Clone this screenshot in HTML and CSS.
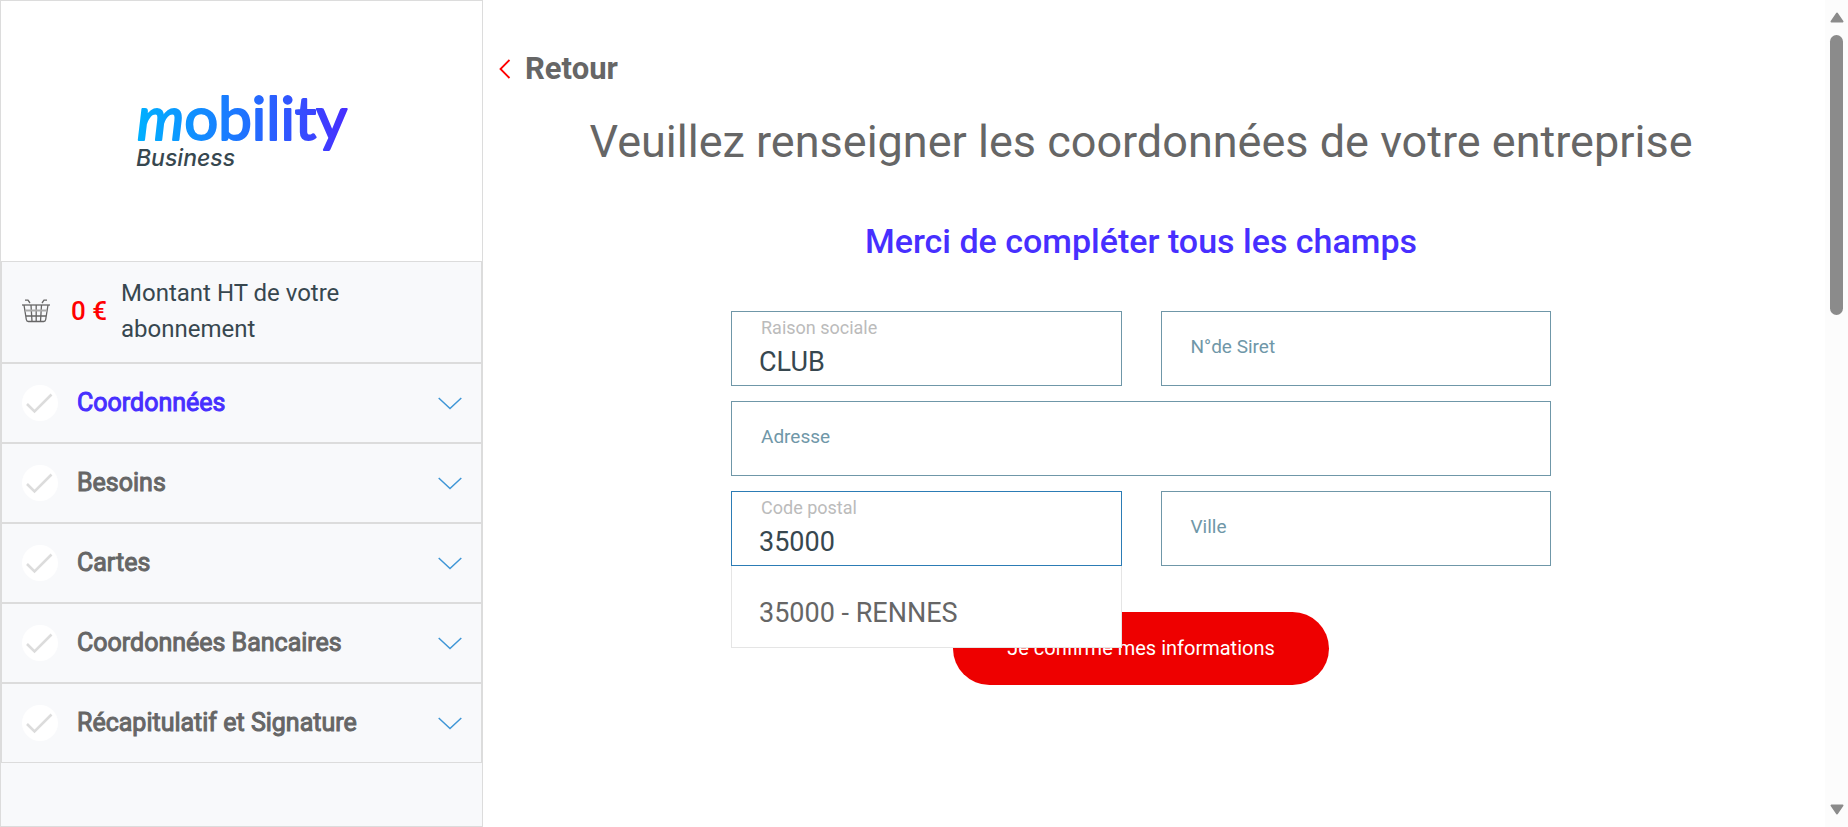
FILE: index.html
```html
<!DOCTYPE html>
<html lang="fr">
<head>
<meta charset="utf-8">
<meta name="viewport" content="width=device-width, initial-scale=1">
<title>Mobility Business</title>
<link rel="stylesheet" href="styles.css">
</head>
<body>
<svg class="defs" width="0" height="0" aria-hidden="true">
  <symbol id="check" viewBox="0 0 36 36"><circle cx="18" cy="18" r="18" fill="#fff"/><path d="M5 19l7.500 7.500L29.500 9.500" fill="none" stroke="#dcdcdc" stroke-width="2.600"/></symbol>
  <symbol id="chevron" viewBox="0 0 24 13"><path d="M.7 1L12 11.500 23.300 1" fill="none" stroke="#3f96d6" stroke-width="1.500"/></symbol>
</svg>
<div class="page">
  <aside class="sidebar">
    <div class="brand">
      <svg class="logo" viewBox="0 0 216 84" role="img" aria-label="Mobility Business">
        <defs><linearGradient id="brand" gradientUnits="userSpaceOnUse" x1="4" y1="0" x2="212" y2="0"><stop offset="0" stop-color="#00b0ff"/><stop offset=".5" stop-color="#1e74ff"/><stop offset="1" stop-color="#472fff"/></linearGradient></defs>
        <text class="logo-name" x="3" y="55" fill="url(#brand)" stroke="url(#brand)"><tspan font-style="italic">m</tspan>obility</text>
        <text class="logo-sub" x="2" y="81">Business</text>
      </svg>
    </div>
    <div class="total">
      <svg class="basket" viewBox="0 0 28 24" fill="none" stroke="#666" stroke-width="1.300"><path d="M3 1.200h3l2 2.800M25 1.200h-3l-2 2.800"/><path d="M0 6h28"/><path d="M2 6l2.300 14.500q.3 2 2 2h15.400q1.700 0 2-2L26 6M9 6l1 16.500M14.200 6v16.500M19.500 6l-1 16.500M3.500 17h21"/><path d="M3 11.500h22" stroke="#aaa" stroke-width="2"/></svg>
      <strong class="amount">0 €</strong>
      <span class="total-label">Montant HT de votre abonnement</span>
    </div>
    <nav class="steps">
      <button class="step active" type="button"><svg class="check"><use href="#check"/></svg><span>Coordonnées</span><svg class="chevron"><use href="#chevron"/></svg></button>
      <button class="step" type="button"><svg class="check"><use href="#check"/></svg><span>Besoins</span><svg class="chevron"><use href="#chevron"/></svg></button>
      <button class="step" type="button"><svg class="check"><use href="#check"/></svg><span>Cartes</span><svg class="chevron"><use href="#chevron"/></svg></button>
      <button class="step" type="button"><svg class="check"><use href="#check"/></svg><span>Coordonnées Bancaires</span><svg class="chevron"><use href="#chevron"/></svg></button>
      <button class="step" type="button"><svg class="check"><use href="#check"/></svg><span>Récapitulatif et Signature</span><svg class="chevron"><use href="#chevron"/></svg></button>
    </nav>
  </aside>
  <main class="main">
    <a class="back" href="#"><svg class="back-icon" viewBox="0 0 12 20"><path d="M10.500 1L1.500 10l9 9" fill="none" stroke="#f00" stroke-width="1.800"/></svg>Retour</a>
    <h1 class="title">Veuillez renseigner les coordonnées de votre entreprise</h1>
    <h2 class="subtitle">Merci de compléter tous les champs</h2>
    <form class="form">
      <div class="field filled"><label for="company">Raison sociale</label><input id="company" type="text" value="CLUB"></div>
      <div class="field"><label for="siret">N°de Siret</label><input id="siret" type="text"></div>
      <div class="field wide"><label for="address">Adresse</label><input id="address" type="text"></div>
      <div class="field filled current"><label for="zip">Code postal</label><input id="zip" type="text" value="35000">
        <ul class="suggestions"><li><button class="suggestion" type="button">35000 - RENNES</button></li></ul>
      </div>
      <div class="field"><label for="city">Ville</label><input id="city" type="text"></div>
      <button class="submit" type="submit">Je confirme mes informations</button>
    </form>
  </main>
  <div class="scrollbar" aria-hidden="true">
    <svg class="arrow" viewBox="0 0 14 11"><path d="M7 1.500L12.500 9.500h-11z" fill="#8b8b8b" stroke="#8b8b8b" stroke-width="2" stroke-linejoin="round"/></svg>
    <div class="track"><div class="thumb"></div></div>
    <svg class="arrow" viewBox="0 0 14 11"><path d="M7 9.500L1.500 1.500h11z" fill="#8b8b8b" stroke="#8b8b8b" stroke-width="2" stroke-linejoin="round"/></svg>
  </div>
</div>
</body>
</html>
```

FILE: styles.css
```css
* { box-sizing: border-box; }
body { margin: 0; font-family: Roboto, sans-serif; color: #666; background: #fff; }
button, input { font: inherit; }
.defs { position: absolute; }
.page { display: flex; min-height: 100vh; }

.sidebar { flex: 0 0 483px; display: flex; flex-direction: column; background: #f8f9fb; border: 1px solid #dcdcdc; }
.brand { display: flex; justify-content: center; padding: 84px 0 92px; background: #fff; }
.logo { width: 216px; height: 84px; overflow: visible; }
.logo-name { font-family: Lato, sans-serif; font-size: 60px; stroke-width: 2px; stroke-linejoin: round; }
.logo-sub { font-family: Inter, sans-serif; font-size: 23px; font-style: italic; font-weight: 500; fill: #37474f; }

.total { display: flex; align-items: center; min-height: 102px; padding: 0 60px 2px 20px; border: 1px solid #dcdcdc; color: #37474f; font-size: 24px; line-height: 36px; }
.basket { flex: none; width: 28px; height: 24px; }
.amount { flex: none; margin: 0 14px 0 21px; color: #f00; font-size: 26px; font-weight: 500; }

.step { display: flex; align-items: center; width: 100%; height: 80px; padding: 0 19px 0 20px; border: 1px solid #dcdcdc; background: none; color: #666; font-size: 25px; text-align: left; -webkit-text-stroke: 1px; }
.step span { flex: 1; padding-bottom: 2px; }
.step.active { color: #472fff; }
.check { flex: none; width: 36px; height: 36px; margin-right: 19px; }
.chevron { flex: none; width: 24px; height: 13px; }

.main { flex: 1; padding: 49px 42px 40px 16px; }
.back { display: inline-flex; align-items: center; gap: 14px; color: #666; font-size: 31px; line-height: 40px; font-weight: 700; text-decoration: none; }
.back-icon { width: 12px; height: 20px; }
.title { margin: 23px 0 0; font-size: 45px; line-height: 60px; font-weight: 400; text-align: center; }
.subtitle { margin: 47px 0 0; color: #472fff; font-size: 34px; line-height: 44px; font-weight: 500; text-align: center; }
.form { display: grid; grid-template-columns: 1fr 1fr; gap: 15px 39px; width: 66%; max-width: 820px; margin: 48px auto 0; }
.field { position: relative; height: 75px; }
.wide { grid-column: 1 / -1; }
.field label { position: absolute; left: 30px; top: 24px; color: #6f97a8; font-size: 19px; line-height: 24px; }
.field input { width: 100%; height: 100%; padding: 26px 27px 0; border: 1px solid #6f97a8; border-radius: 0; outline: 0; background: #fff; color: #37474f; font-size: 27px; }
.field.filled label { top: 5px; color: #bbb; font-size: 18px; }
.field.current input { border-color: #2c7cb5; }
.suggestions { position: absolute; z-index: 2; top: 100%; left: 0; right: 0; margin: 0; padding: 0; list-style: none; background: #fff; border: 1px solid #e5e5e5; border-top: 0; }
.suggestion { width: 100%; height: 81px; padding: 12px 27px 0; border: 0; background: none; color: #666; font-size: 27px; line-height: 30px; text-align: left; }
.submit { grid-column: 1 / -1; justify-self: center; height: 73px; margin-top: 31px; padding: 0 54px 2px; border: 0; border-radius: 37px; background: #ee0000; color: #fff; font-size: 20px; }

.scrollbar { flex: 0 0 23px; display: flex; flex-direction: column; align-items: center; padding: 12px 0; background: #fcfcfc; }
.arrow { flex: none; width: 14px; height: 11px; }
.track { flex: 1; padding: 12px 0; }
.thumb { width: 13px; height: 37%; min-height: 278px; border-radius: 7px; background: #8b8b8b; }
```
